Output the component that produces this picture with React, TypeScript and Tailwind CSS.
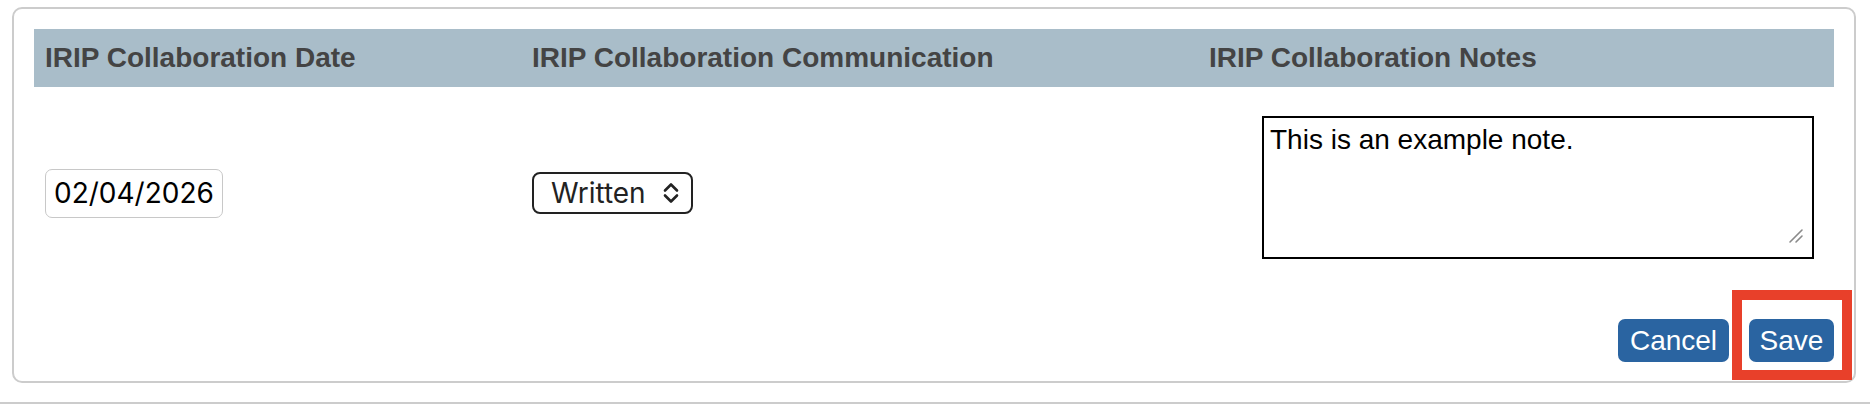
import React from 'react';

const columns = [
  { label: 'IRIP Collaboration Date', pad: 'pl-[11px]' },
  { label: 'IRIP Collaboration Communication', pad: 'pl-[11px]' },
  { label: 'IRIP Collaboration Notes', pad: 'pl-[4px]' },
];

function UpDownChevron() {
  return (
    <svg width="18" height="24" viewBox="0 0 18 24" fill="none" stroke="#222" strokeWidth="2.6" strokeLinecap="round" strokeLinejoin="round">
      <path d="M3 9.5 9 3.5 15 9.5" />
      <path d="M3 14.5 9 20.5 15 14.5" />
    </svg>
  );
}

function ResizeGrip() {
  return (
    <svg width="16" height="16" viewBox="0 0 16 16" className="absolute right-[10px] bottom-[15px] pointer-events-none" stroke="#8a8a8a" strokeWidth="1.6" strokeLinecap="round">
      <path d="M14 2 2 14" />
      <path d="M14 8 8 14" />
    </svg>
  );
}

export default function App() {
  return (
    <div className="relative w-[1870px] h-[406px] bg-white overflow-hidden font-['Liberation_Sans',Arial,sans-serif]">
      {/* Card */}
      <div className="ml-[12px] mr-[14px] mt-[7px] h-[376px] rounded-[10px] border-2 border-[#cccccc] p-[20px]">
        {/* Header row */}
        <div className="grid grid-cols-[487px_684px_629px] h-[58px] bg-[#a9bdc9]">
          {columns.map((c) => (
            <div key={c.label} className={`${c.pad} flex items-center text-[28px] leading-[32px] font-bold text-[#444444] whitespace-nowrap`}>
              {c.label}
            </div>
          ))}
        </div>

        {/* Data row */}
        <div className="grid grid-cols-[487px_684px_629px] h-[212px] items-center">
          <div className="pl-[11px]">
            <div className="w-[178px] h-[49px] rounded-[7px] border border-[#c8c8c8] pl-[8px] flex items-center font-['Inter',sans-serif] text-[28px] text-black">
              02/04/2026
            </div>
          </div>
          <div className="pl-[11px]">
            <div className="w-[161px] h-[42px] rounded-[8px] border-2 border-[#222222] pl-[17px] pr-[11px] flex items-center justify-between font-['Inter',sans-serif] text-[28px] text-[#222222]">
              <span>Written</span>
              <UpDownChevron />
            </div>
          </div>
          <div className="pl-[57px]">
            <div className="relative w-[552px]">
              <textarea
                defaultValue="This is an example note."
                className="block w-[552px] h-[143px] mb-[12px] resize-none border-2 border-black bg-white pl-[6px] pt-[6px] text-[28px] leading-[32px] text-black outline-none font-['Liberation_Sans',Arial,sans-serif]"
              />
              <ResizeGrip />
            </div>
          </div>
        </div>

        {/* Actions */}
        <div className="mt-[20px] flex justify-end gap-[20px]">
          <button className="w-[111px] h-[43px] rounded-[7px] bg-[#2a64a1] text-white text-[28px] leading-none">
            Cancel
          </button>
          <button className="w-[85px] h-[43px] rounded-[7px] bg-[#2a64a1] text-white text-[28px] leading-none">
            Save
          </button>
        </div>
      </div>

      {/* Next section divider */}
      <div className="mt-[19px] border-t-2 border-[#cccccc]" />

      {/* Highlight annotation around Save */}
      <div className="absolute left-[1732px] top-[290px] w-[120px] h-[90px] border-[10px] border-[#e8402a]" />
    </div>
  );
}
